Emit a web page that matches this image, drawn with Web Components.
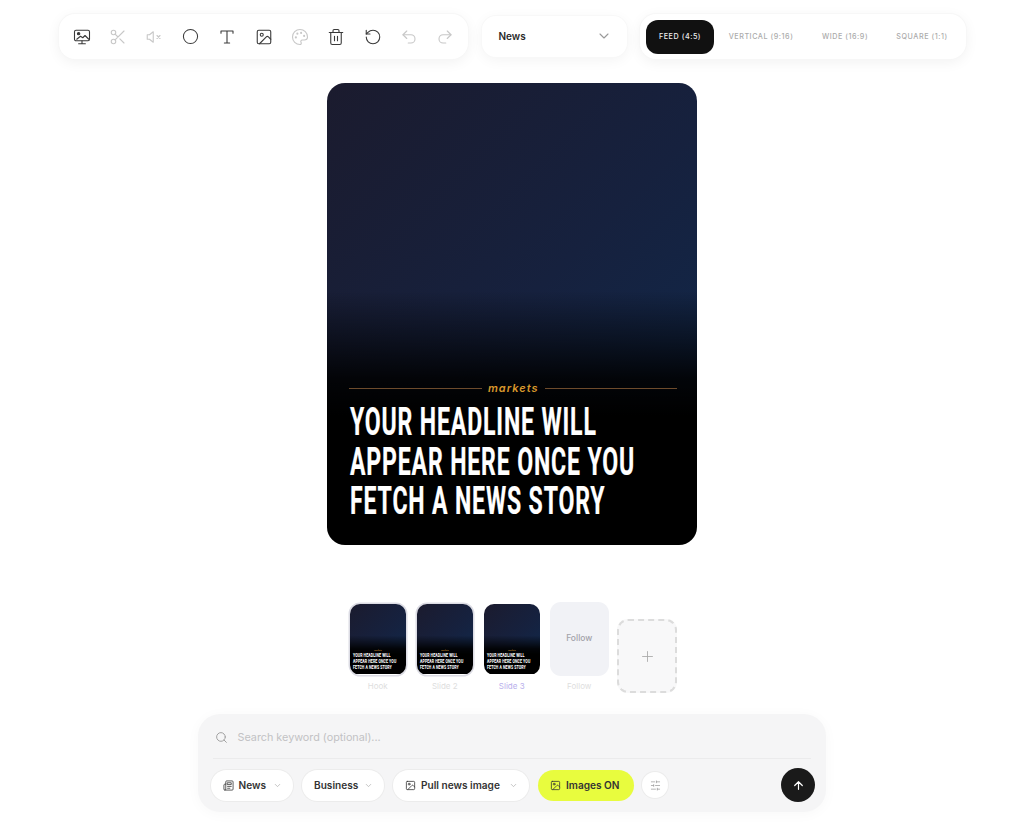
<!DOCTYPE html>
<html><head><meta charset="utf-8"><title>Editor</title>
<style>
html,body{margin:0;padding:0;background:#fff}
body{width:1024px;height:838px;overflow:hidden;font-family:Inter,"Liberation Sans",sans-serif;color:#222}
</style></head><body>
<app-shell></app-shell>
<script>
const ic=(d,s=18,c='#333',w=1.6)=>`<svg width="${s}" height="${s}" viewBox="0 0 24 24" fill="none" stroke="${c}" stroke-width="${w}" stroke-linecap="round" stroke-linejoin="round">${d}</svg>`;
const P={
 screen:'<rect x="2" y="3" width="20" height="14" rx="2"/><circle cx="7.5" cy="7.5" r="1.6" fill="#333"/><path d="m5 15 5-4 3 2 3-3 5 5"/><path d="M12 17v4M7.5 21h9"/>',
 scissors:'<circle cx="6" cy="6" r="3"/><circle cx="6" cy="18" r="3"/><path d="M20 4 8.12 15.88M14.47 14.48 20 20M8.12 8.12 12 12"/>',
 mute:'<path d="M11 5 6 9H3v6h3l5 4z"/><path d="m16 10 4 4M20 10l-4 4"/>',
 circle:'<circle cx="12" cy="12" r="10"/>',
 text:'<path d="M4 7V4h16v3M12 4v16M8.5 20h7"/>',
 image:'<rect x="3" y="3" width="18" height="18" rx="2"/><circle cx="9" cy="9" r="2"/><path d="m21 15-3.1-3.1a2 2 0 0 0-2.8 0L6 21"/>',
 palette:'<path d="M12 22a10 10 0 1 1 10-10c0 2.8-2.2 4-4.5 4H15a2 2 0 0 0-1.5 3.3c.5.7.2 2.7-1.5 2.7z"/><circle cx="13.5" cy="6.5" r=".7"/><circle cx="17.5" cy="10.5" r=".7"/><circle cx="8.5" cy="7.5" r=".7"/><circle cx="6.5" cy="12.5" r=".7"/>',
 trash:'<path d="M3 6h18M8 6V3.5A1.5 1.5 0 0 1 9.5 2h5A1.5 1.5 0 0 1 16 3.5V6M5 6v14a2 2 0 0 0 2 2h10a2 2 0 0 0 2-2V6M10 11v6M14 11v6"/>',
 reset:'<path d="M3 12a9 9 0 1 0 9-9 9.75 9.75 0 0 0-6.74 2.74L3 8"/><path d="M3 3v5h5"/>',
 undo:'<path d="M9 14 4 9l5-5"/><path d="M4 9h10.5a5.5 5.5 0 0 1 0 11H11"/>',
 redo:'<path d="m15 14 5-5-5-5"/><path d="M20 9H9.5a5.5 5.5 0 0 0 0 11H13"/>',
 chev:'<path d="m6 9 6 6 6-6"/>',
 search:'<circle cx="11" cy="11" r="8"/><path d="m21 21-4.3-4.3"/>',
 news:'<path d="M4 22h16a2 2 0 0 0 2-2V4a2 2 0 0 0-2-2H8a2 2 0 0 0-2 2v16a2 2 0 0 1-4 0v-9c0-1.1.9-2 2-2h2"/><path d="M18 14h-8M15 18h-5M10 6h8v4h-8z"/>',
 sliders:'<path d="M21 4h-7M10 4H3M21 12h-9M8 12H3M21 20h-5M12 20H3M14 2v4M8 10v4M16 18v4"/>',
 up:'<path d="M12 19V5M5 12l7-7 7 7"/>',
 plus:'<path d="M5 12h14M12 5v14"/>'
};
function def(name,html){customElements.define(name,class extends HTMLElement{connectedCallback(){if(!this.shadowRoot){this.attachShadow({mode:'open'}).innerHTML=typeof html==='function'?html(this):html;}}})}

def('tool-bar',`<style>:host{display:flex;align-items:center;box-sizing:border-box;width:409px;height:45px;padding:0 12.5px 0 12.7px;justify-content:space-between;background:#fff;border-radius:16px;box-shadow:0 0 0 1px #f7f7f7,0 3px 14px rgba(0,0,0,.06)}
span{display:flex;width:20px;justify-content:center}.d{opacity:.28}svg{display:block}</style>`+
[['screen',0],['scissors',1],['mute',1],['circle',0],['text',0],['image',0],['palette',1],['trash',0],['reset',0],['undo',1],['redo',1]].map(([n,d])=>`<span class="${d?'d':''}">${ic(P[n],n==='circle'?17:18,'#3a3a3a',1.45)}</span>`).join(''));

def('type-select',`<style>:host{display:flex;align-items:center;justify-content:space-between;box-sizing:border-box;width:145px;height:41px;padding:0 15px 1px 17px;background:#fff;border-radius:14px;box-shadow:0 0 0 1px #f8f8f8,0 3px 14px rgba(0,0,0,.05);font-size:10px;font-weight:600;color:#2a2a2a}</style><slot></slot>${ic(P.chev,16,'#999',1.6)}`);

def('ratio-tabs',`<style>:host{display:flex;align-items:center;box-sizing:border-box;width:326px;height:45px;padding:0 4px 0 6px;background:#fff;border-radius:16px;box-shadow:0 0 0 1px #f7f7f7,0 3px 14px rgba(0,0,0,.06);font-size:7.2px;font-weight:500;letter-spacing:.55px;color:#ababab;white-space:nowrap}
b{font-weight:500;display:flex;align-items:center;justify-content:center;height:34px}
.on{width:68px;background:#111;color:#eee;border-radius:12px}</style>
<b class="on">FEED (4:5)</b><b style="width:94px">VERTICAL (9:16)</b><b style="width:74px">WIDE (16:9)</b><b style="width:80px">SQUARE (1:1)</b>`);

def('story-card',h=>{
 const k=+(h.getAttribute('k')||1);
 return `<style>:host{display:block;width:${370*k}px;height:${462*k}px;overflow:hidden;position:relative;border-radius:${18*k}px;background:linear-gradient(180deg,transparent 0,transparent 45%,rgba(0,0,0,.5) 56%,rgba(0,0,0,.88) 64%,#000 72%),linear-gradient(135deg,#1b1b2e 0%,#16213e 50%,#0f2a4e 100%)}
.in{position:absolute;left:${22*k}px;top:${298*k}px;width:${328*k}px}
.m{display:flex;align-items:center;gap:${6*k}px;font-size:${11*k}px;font-style:italic;font-weight:600;letter-spacing:${1*k}px;color:#d9982c;line-height:${14*k}px}
.m i{flex:1;height:${k<1?0:1}px;background:#6d4b2c}
.h{margin:${8*k}px 0 0 ${1*k}px;font-family:Roboto,"Liberation Sans",sans-serif;font-weight:700;color:#fff;font-size:${38*k}px;letter-spacing:${1.4*k}px;white-space:nowrap;transform:scaleX(.607);transform-origin:0 0;width:${530*k}px;-webkit-text-stroke:${.22*k}px #fff}
.h div{height:${39.5*k}px;line-height:${39.5*k}px}
</style><div class="in"><div class="m"><i></i><span>markets</span><i></i></div><div class="h"><div>YOUR HEADLINE WILL</div><div>APPEAR HERE ONCE YOU</div><div>FETCH A NEWS STORY</div></div></div>`});

def('slide-thumb',h=>{
 const lab=h.getAttribute('label'),act=h.hasAttribute('active'),ring=h.hasAttribute('ring'),f=h.hasAttribute('follow');
 const w=f?59:56;
 return `<style>:host{display:flex;flex-direction:column;align-items:center;width:${w}px;${f?'margin-left:-1px;':''}}
.a{height:74px;display:flex;align-items:center}
.b{width:56px;height:71px;border-radius:10px;overflow:hidden;position:relative;${ring?'box-shadow:0 0 0 1.5px #dcdce4':''}}
.f{background:#f1f2f6;color:#a3a3aa;font-size:8.5px;font-weight:500;display:flex;align-items:center;justify-content:center;padding-bottom:3px;box-sizing:border-box;width:59px;height:74px;border-radius:11px}
.t{position:absolute;left:0;top:0}
.l{margin-top:5px;font-size:8px;line-height:10px;color:${act?'#b9b0ec':'#dedede'}}</style>
<div class="a">${f?'<div class="f">Follow</div>':`<div class="b"><story-card class="t" k="0.1525"></story-card></div>`}</div><div class="l">${lab}</div>`});

def('add-slide',`<style>:host{display:flex;align-items:center;justify-content:center;box-sizing:border-box;width:60px;height:74px;border:2px dashed #dcdcdc;border-radius:11px;background:#f8f8f9;margin-top:17px}</style>${ic(P.plus,17,'#a8a8a8',1.2)}`);

def('pill-chip',h=>{
 const on=h.hasAttribute('on');
 return `<style>:host{display:inline-flex;align-items:center;box-sizing:border-box;height:31px;padding:0 11px 0 12px;border-radius:16px;background:${on?'#e8fc3e':'#fff'};${on?'':'box-shadow:0 0 0 1px #ececec;'}font-size:10.1px;font-weight:600;color:#333;white-space:nowrap;gap:5px;flex:none}
svg{display:block;flex:none}</style>${h.getAttribute('icon')?ic(P[h.getAttribute('icon')],11,'#333',1.7):''}<slot></slot>${on?'':`<span style="display:flex;margin-left:auto">${ic(P.chev,9,'#aaa',1.8)}</span>`}`});

def('prompt-box',`<style>:host{display:block;box-sizing:border-box;width:628px;height:98px;padding:0 12.5px;border-radius:22px;background:#f5f5f6;box-shadow:0 2px 14px rgba(0,0,0,.03)}
.s{display:flex;align-items:center;gap:9.5px;height:45px;margin:0 2.5px;border-bottom:1px solid #ebebec;font-size:10.8px;color:#c2c2c4;box-sizing:border-box;padding:3px 0 0 2px}
.r{display:flex;align-items:center;gap:9px;margin-top:9px}
.o{display:flex;width:26px;height:26px;border-radius:50%;background:#fff;align-items:center;justify-content:center;box-shadow:0 0 0 1px #ececec;margin-left:-1px}
.g{display:flex;width:34px;height:34px;border-radius:50%;background:#1a1a1a;align-items:center;justify-content:center;margin-left:auto;margin-right:-1.5px}</style>
<div class="s">${ic(P.search,13,'#9f9f9f',1.8)}<span>Search keyword (optional)...</span></div>
<div class="r"><slot></slot><span class="o">${ic(P.sliders,11,'#999',1.6)}</span><span class="g">${ic(P.up,13,'#fff',2.2)}</span></div>`);

def('app-shell',`<style>:host{display:flex;flex-direction:column;align-items:center;width:1024px;height:838px;box-sizing:border-box;padding-top:14px}
.top{display:flex;align-items:center;gap:13.5px;margin-left:1px;height:45px}
story-card{margin-top:24px;margin-left:.5px}
.th{display:flex;gap:11px;margin-top:57px;align-items:flex-start;margin-left:3px}
add-slide{margin-left:-2.5px}
prompt-box{margin-top:21px}
pill-chip{display:inline-flex}</style>
<div class="top"><tool-bar></tool-bar><type-select>News</type-select><ratio-tabs></ratio-tabs></div>
<story-card k="1"></story-card>
<div class="th"><slide-thumb label="Hook" ring></slide-thumb><slide-thumb label="Slide 2" ring></slide-thumb><slide-thumb label="Slide 3" active></slide-thumb><slide-thumb label="Follow" follow></slide-thumb><add-slide></add-slide></div>
<prompt-box><pill-chip icon="news" style="width:82.5px">News</pill-chip><pill-chip style="width:82px">Business</pill-chip><pill-chip icon="image" style="width:136px">Pull news image</pill-chip><pill-chip icon="image" on style="width:96px">Images ON</pill-chip></prompt-box>`);
</script></body></html>
